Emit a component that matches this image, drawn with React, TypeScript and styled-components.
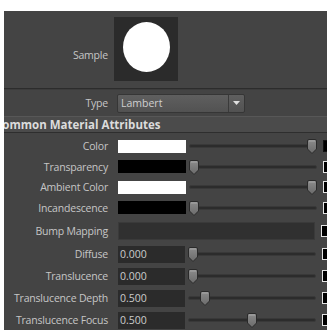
import React from "react";
import styled, { createGlobalStyle } from "styled-components";

const GlobalStyle = createGlobalStyle`
  html, body { margin: 0; padding: 0; background: #ffffff; }
  body { font-family: "Open Sans", "Liberation Sans", sans-serif; }
  * { box-sizing: border-box; }
`;

const Page = styled.div`
  width: 329px;
  height: 331px;
  padding: 11px 2px 1px 4px;
  overflow: hidden;
`;

const Panel = styled.div`
  background: #444444;
  height: 100%;
  overflow: hidden;
  display: flex;
  flex-direction: column;
`;

const Row = styled.div<{ $h: number }>`
  display: flex;
  align-items: center;
  height: ${(p) => p.$h}px;
  flex: none;
`;

const Label = styled.div`
  width: 104px;
  flex: none;
  text-align: right;
  font-size: 10.5px;
  letter-spacing: -0.2px;
  color: #c6c6c6;
  white-space: nowrap;
  margin-right: 10px;
`;

const SampleRow = styled(Row)`
  align-items: flex-start;
  padding-top: 6px;
`;

const SampleLabel = styled(Label)`
  margin-top: 31px;
  margin-right: 6px;
`;

const SwatchBox = styled.div`
  width: 64px;
  height: 64px;
  background: #2b2b2b;
  display: flex;
  align-items: center;
  justify-content: center;
`;

const Ball = styled.div`
  width: 47px;
  height: 50px;
  border-radius: 50%;
  background: #ffffff;
  margin-top: -4px;
`;

const Divider = styled.div<{ $c: string }>`
  height: 1px;
  flex: none;
  background: ${(p) => p.$c};
`;

const Dropdown = styled.div`
  width: 128px;
  height: 19px;
  margin-left: -1px;
  display: flex;
  border: 1px solid #363636;
  border-radius: 2px;
  background: linear-gradient(#5f5f5f, #525252);
`;

const DropText = styled.div`
  flex: 1;
  font-size: 10.5px;
  color: #cfcfcf;
  padding-left: 3px;
  line-height: 17px;
`;

const DropArrow = styled.div`
  width: 16px;
  border-left: 1px solid #3a3a3a;
  display: flex;
  align-items: center;
  justify-content: center;
`;

const Header = styled.div`
  height: 17px;
  flex: none;
  background: #4b4b4b;
  border-top: 1px solid #575757;
  border-bottom: 1px solid #2e2e2e;
  display: flex;
  align-items: center;
  font-weight: 700;
  font-size: 11.5px;
  color: #dcdcdc;
  white-space: nowrap;
`;

const HeaderText = styled.span`
  margin-left: -9px;
`;

const ColorSwatch = styled.div<{ $c: string }>`
  width: 68px;
  height: 13px;
  flex: none;
  background: ${(p) => p.$c};
`;

const FloatField = styled.div`
  width: 67px;
  height: 17px;
  flex: none;
  background: #2b2b2b;
  color: #cccccc;
  font-size: 10.5px;
  line-height: 17px;
  padding-left: 2px;
`;

const WideField = styled.div`
  width: 197px;
  height: 18px;
  flex: none;
  background: #303030;
  border: 1px solid #3a3a3a;
`;

const Track = styled.div`
  position: relative;
  width: 128px;
  height: 14px;
  margin-left: 3px;
  flex: none;
`;

const Groove = styled.div`
  position: absolute;
  left: 0;
  right: 0;
  top: 5px;
  height: 4px;
  border-radius: 2px;
  background: #2c2c2c;
  border: 1px solid #393939;
`;

const Handle = styled.svg`
  position: absolute;
  top: 0;
`;

const MapButton = styled.div<{ $dark?: boolean }>`
  width: 12px;
  height: 12px;
  flex: none;
  margin-left: 6px;
  background: #000;
  border: 1px solid ${(p) => (p.$dark ? "#111" : "#e6e6e6")};
`;

function Slider({ frac }: { frac: number }) {
  const left = frac * (128 - 10);
  return (
    <Track>
      <Groove />
      <Handle width="10" height="15" viewBox="0 0 10 15" style={{ left }}>
        <defs>
          <linearGradient id="hg" x1="0" y1="0" x2="0" y2="1">
            <stop offset="0" stopColor="#8c8c8c" />
            <stop offset="1" stopColor="#6a6a6a" />
          </linearGradient>
        </defs>
        <path
          d="M0.5 2 Q0.5 0.5 2 0.5 H8 Q9.5 0.5 9.5 2 V10 L5 14.5 L0.5 10 Z"
          fill="url(#hg)"
          stroke="#2a2a2a"
          strokeWidth="1"
        />
        <path d="M2 2 H8" stroke="#a8a8a8" strokeWidth="1" />
      </Handle>
    </Track>
  );
}

const colorRows = [
  { label: "Color", c: "#ffffff", frac: 1, h: 20, dark: true },
  { label: "Transparency", c: "#000000", frac: 0, h: 21 },
  { label: "Ambient Color", c: "#ffffff", frac: 1, h: 20 },
  { label: "Incandescence", c: "#000000", frac: 0, h: 21 },
];

const floatRows = [
  { label: "Diffuse", v: "0.000", frac: 0 },
  { label: "Translucence", v: "0.000", frac: 0 },
  { label: "Translucence Depth", v: "0.500", frac: 0.1 },
  { label: "Translucence Focus", v: "0.500", frac: 0.5 },
];

export default function App() {
  return (
    <>
      <GlobalStyle />
      <Page>
        <Panel>
          <SampleRow $h={77}>
            <SampleLabel>Sample</SampleLabel>
            <SwatchBox>
              <Ball />
            </SwatchBox>
          </SampleRow>
          <Divider $c="#2c2c2c" />
          <Divider $c="#3c3c3c" />
          <Row $h={26}>
            <Label>Type</Label>
            <Dropdown>
              <DropText>Lambert</DropText>
              <DropArrow>
                <svg width="7" height="4" viewBox="0 0 7 4">
                  <path d="M0 0 H7 L3.5 4 Z" fill="#e0e0e0" />
                </svg>
              </DropArrow>
            </Dropdown>
          </Row>
          <Header>
            <HeaderText>Common Material Attributes</HeaderText>
          </Header>
          <Row $h={3} />
          {colorRows.map((r) => (
            <Row key={r.label} $h={r.h}>
              <Label>{r.label}</Label>
              <ColorSwatch $c={r.c} />
              <Slider frac={r.frac} />
              <MapButton $dark={r.dark} />
            </Row>
          ))}
          <Row $h={25}>
            <Label>Bump Mapping</Label>
            <WideField />
            <MapButton />
          </Row>
          {floatRows.map((r) => (
            <Row key={r.label} $h={22}>
              <Label>{r.label}</Label>
              <FloatField>{r.v}</FloatField>
              <Slider frac={r.frac} />
              <MapButton />
            </Row>
          ))}
        </Panel>
      </Page>
    </>
  );
}
